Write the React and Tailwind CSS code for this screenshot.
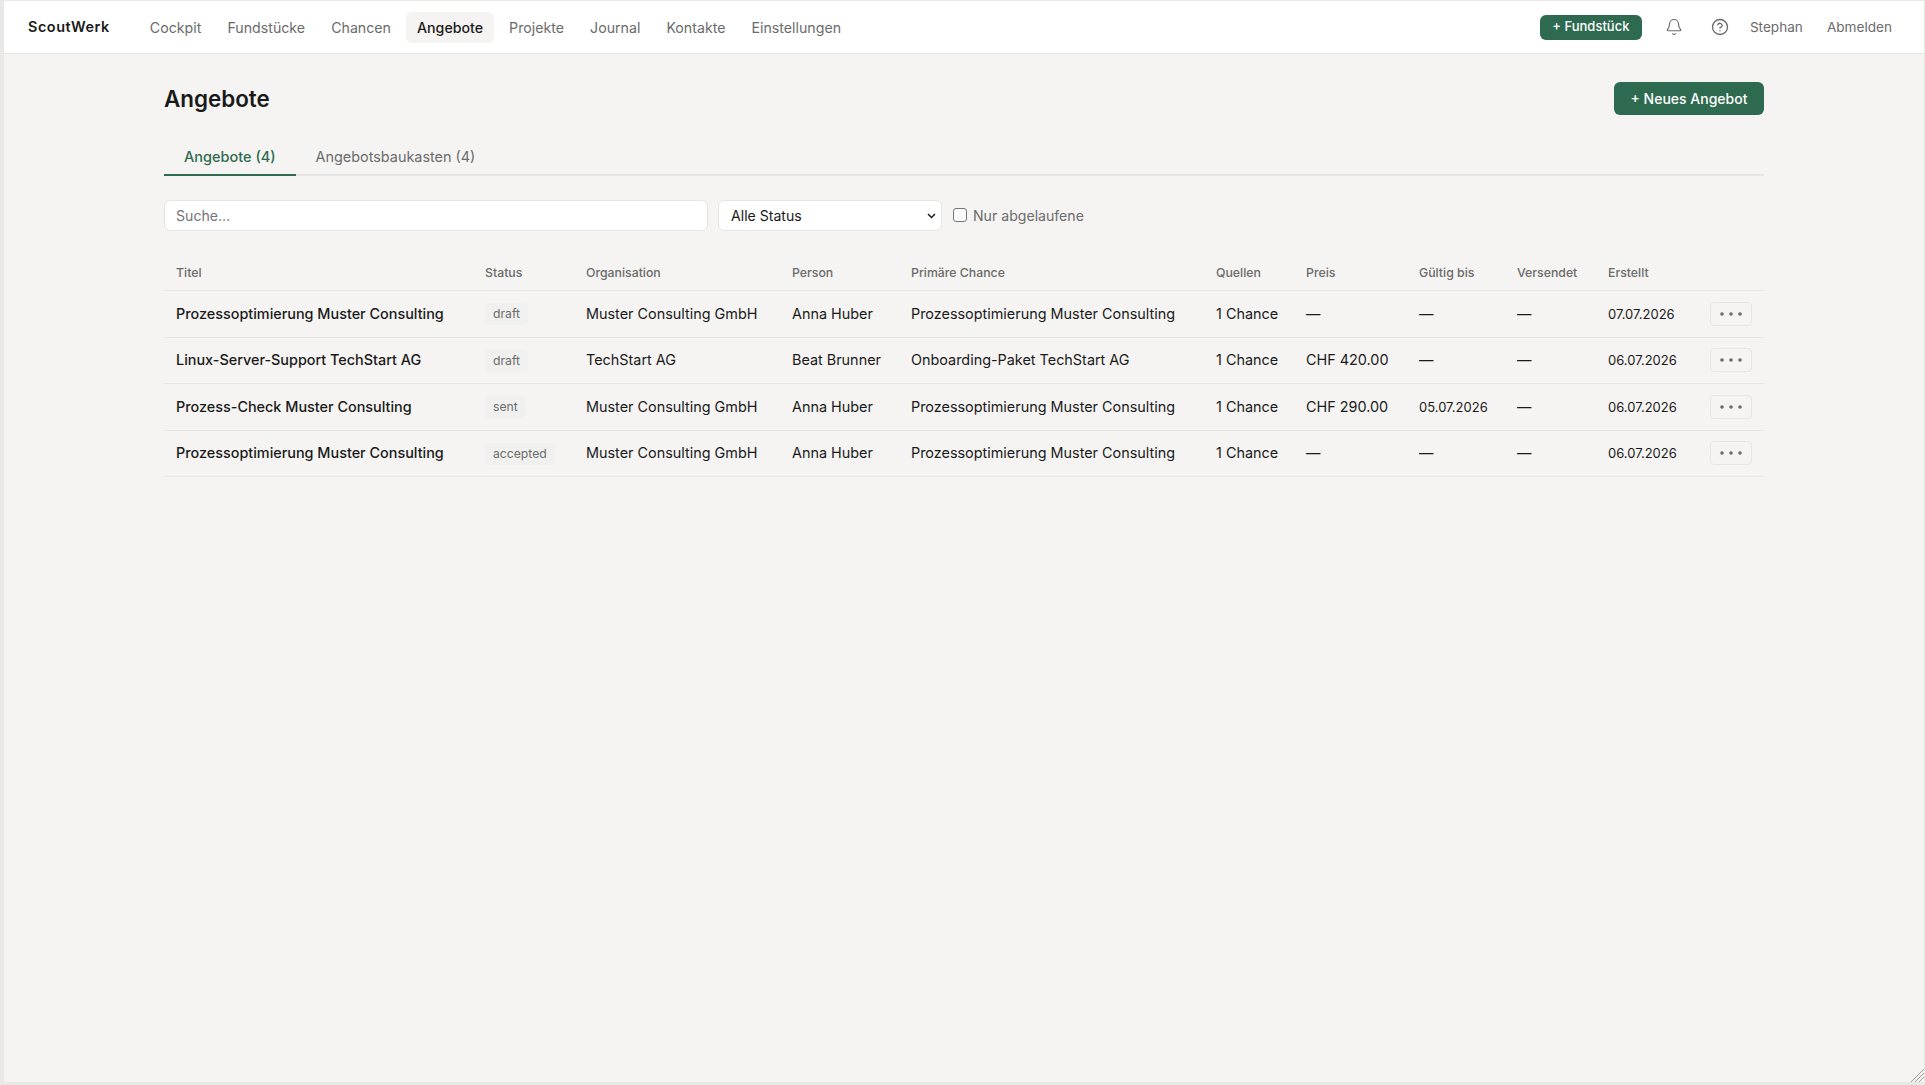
import React from "react";

const NAV = ["Cockpit", "Fundstücke", "Chancen", "Angebote", "Projekte", "Journal", "Kontakte", "Einstellungen"];
const ROWS = [
  ["Prozessoptimierung Muster Consulting", "draft", "Muster Consulting GmbH", "Anna Huber", "Prozessoptimierung Muster Consulting", "—", "—", "07.07.2026"],
  ["Linux-Server-Support TechStart AG", "draft", "TechStart AG", "Beat Brunner", "Onboarding-Paket TechStart AG", "CHF 420.00", "—", "06.07.2026"],
  ["Prozess-Check Muster Consulting", "sent", "Muster Consulting GmbH", "Anna Huber", "Prozessoptimierung Muster Consulting", "CHF 290.00", "05.07.2026", "06.07.2026"],
  ["Prozessoptimierung Muster Consulting", "accepted", "Muster Consulting GmbH", "Anna Huber", "Prozessoptimierung Muster Consulting", "—", "—", "06.07.2026"],
];
const HEAD = [
  ["Titel", "w-[309px]"], ["Status", "w-[101px]"], ["Organisation", "w-[206px]"], ["Person", "w-[119px]"],
  ["Primäre Chance", "w-[305px]"], ["Quellen", "w-[90px]"], ["Preis", "w-[113px]"], ["Gültig bis", "w-[98px]"],
  ["Versendet", "w-[91px]"], ["Erstellt", "w-[102px]"], ["", "w-[66px]"],
];

export default function App() {
  return (
    <div className="h-[1085px] w-[1925px] overflow-hidden bg-[#e8e8e6] pt-px pb-[3px] pl-[4px] pr-px font-['Inter',sans-serif]">
      <div className="relative flex h-full flex-col bg-[#f5f4f2] text-[#1a1a1a]">
        <header className="flex h-[53px] shrink-0 items-center border-b border-[#e5e5e3] bg-white pl-6 pr-8">
          <span className="text-[14.4px] font-semibold tracking-[0.55px] text-[#1a1a1a]">ScoutWerk</span>
          <nav className="ml-[29px] flex items-center gap-1">
            {NAV.map((n) => (
              <a key={n} className={n === "Angebote" ? "rounded-md bg-[#f5f4f2] px-[11px] py-[6px] text-[14.2px] font-medium leading-[19px] text-[#1a1a1a]" : "rounded-md px-[11px] py-[6px] text-[14.2px] leading-[19px] text-[#6b6b6b]"}>{n}</a>
            ))}
          </nav>
          <div className="ml-auto flex items-center">
            <button className="h-[25px] w-[102px] rounded-md bg-[#2d6a4f] text-[13px] font-medium text-white">+ Fundstück</button>
            <svg className="ml-[23px] text-[#6b6b6b]" width="18" height="18" viewBox="0 0 24 24" fill="none" stroke="currentColor" strokeWidth="1.6" strokeLinecap="round" strokeLinejoin="round">
              <path d="M10.3 21a1.94 1.94 0 0 0 3.4 0" />
              <path d="M3.3 15.3A1 1 0 0 0 4 17h16a1 1 0 0 0 .7-1.7C19.4 14 18 12.5 18 8A6 6 0 0 0 6 8c0 4.5-1.4 6-2.7 7.3" />
            </svg>
            <svg className="ml-[28px] text-[#6b6b6b]" width="18" height="18" viewBox="0 0 24 24" fill="none" stroke="currentColor" strokeWidth="1.8" strokeLinecap="round" strokeLinejoin="round">
              <circle cx="12" cy="12" r="10" />
              <path d="M9.1 9a3 3 0 0 1 5.8 1c0 2-3 3-3 3" />
              <path d="M12 17h.01" />
            </svg>
            <span className="ml-[21px] text-[13.6px] text-[#6b6b6b]">Stephan</span>
            <span className="ml-6 text-[13.6px] text-[#6b6b6b]">Abmelden</span>
          </div>
        </header>
        <main className="mx-auto w-[1600px] pt-7">
          <div className="flex items-center justify-between">
            <h1 className="text-[22.4px] font-semibold leading-8 text-[#1a1a1a]">Angebote</h1>
            <button className="h-[33px] w-[150px] rounded-md bg-[#2d6a4f] text-[14px] font-medium text-white">+ Neues Angebot</button>
          </div>
          <div className="mt-[24px] flex border-b-2 border-[#e5e5e3]">
            <button className="-mb-[2px] border-b-2 border-[#2d6a4f] px-5 pb-[7px] pt-2 text-[14.5px] font-medium leading-5 text-[#2d6a4f]">Angebote (4)</button>
            <button className="-mb-[2px] border-b-2 border-transparent px-5 pb-[7px] pt-2 text-[14.4px] leading-5 text-[#6b6b6b]">Angebotsbaukasten (4)</button>
          </div>
          <div className="mt-6 flex items-center">
            <input readOnly placeholder="Suche..." className="h-[31px] w-[544px] rounded-md border border-[#e5e5e3] bg-white px-[11px] text-[14.1px] text-[#1a1a1a] placeholder:text-[#757575] outline-none" />
            <div className="relative ml-[10px] w-[224px]">
              <select className="h-[31px] w-full appearance-none rounded-md border border-[#e5e5e3] bg-white px-3 text-[14.1px] text-[#1a1a1a] outline-none">
                <option>Alle Status</option>
              </select>
              <svg className="pointer-events-none absolute right-[6px] top-[13px] text-[#1a1a1a]" width="9" height="6" viewBox="0 0 9 6" fill="none" stroke="currentColor" strokeWidth="1.5">
                <path d="M1 1l3.5 3.5L8 1" />
              </svg>
            </div>
            <label className="ml-[11px] flex items-center gap-[6px] text-[14.1px] text-[#6b6b6b]">
              <input type="checkbox" className="m-0 h-[14px] w-[14px] appearance-none rounded-[3px] border border-[#77757f] bg-[#fafafa]" />
              Nur abgelaufene
            </label>
          </div>
          <table className="mt-[25px] w-[1600px] table-fixed border-collapse text-left">
            <thead>
              <tr className="border-b border-[#e5e5e3]">
                {HEAD.map(([h, w], i) => (
                  <th key={i} className={`${w} px-3 py-[9px] text-[12.3px] font-medium leading-4 text-[#6b6b6b]`}>{h}</th>
                ))}
              </tr>
            </thead>
            <tbody>
              {ROWS.map((r, i) => (
                <tr key={i} className="h-[46.5px] border-b border-[#e5e5e3] text-[14.4px]">
                  <td className="whitespace-nowrap px-3 font-medium text-[#1a1a1a]">{r[0]}</td>
                  <td className="px-3"><span className="inline-block rounded-[4px] bg-[#f0f0ee] px-2 py-[3px] align-middle text-[12.2px] leading-4 text-[#6b6b6b]">{r[1]}</span></td>
                  <td className="whitespace-nowrap px-3">{r[2]}</td>
                  <td className="whitespace-nowrap px-3">{r[3]}</td>
                  <td className="whitespace-nowrap px-3">{r[4]}</td>
                  <td className="whitespace-nowrap px-3">1 Chance</td>
                  <td className="whitespace-nowrap px-3">{r[5]}</td>
                  <td className="whitespace-nowrap px-3"><span className={r[6] === "—" ? "" : "align-middle text-[13px]"}>{r[6]}</span></td>
                  <td className="whitespace-nowrap px-3">—</td>
                  <td className="whitespace-nowrap px-3"><span className="align-middle text-[13px]">{r[7]}</span></td>
                  <td className="px-3">
                    <button className="flex h-[24px] w-[42px] items-center justify-center rounded-[4px] border border-[#e5e5e3] text-[#6b6b6b]">
                      <svg width="22" height="4" viewBox="0 0 22 4" fill="currentColor"><circle cx="2" cy="2" r="1.8"/><circle cx="11" cy="2" r="1.8"/><circle cx="20" cy="2" r="1.8"/></svg>
                    </button>
                  </td>
                </tr>
              ))}
            </tbody>
          </table>
        </main>
        <svg className="absolute bottom-0 right-0 text-[#9a9a9a]" width="14" height="14" viewBox="0 0 14 14" stroke="currentColor" strokeWidth="1">
          <path d="M1 14L14 1M5 14L14 5M9 14L14 9" />
        </svg>
      </div>
    </div>
  );
}
